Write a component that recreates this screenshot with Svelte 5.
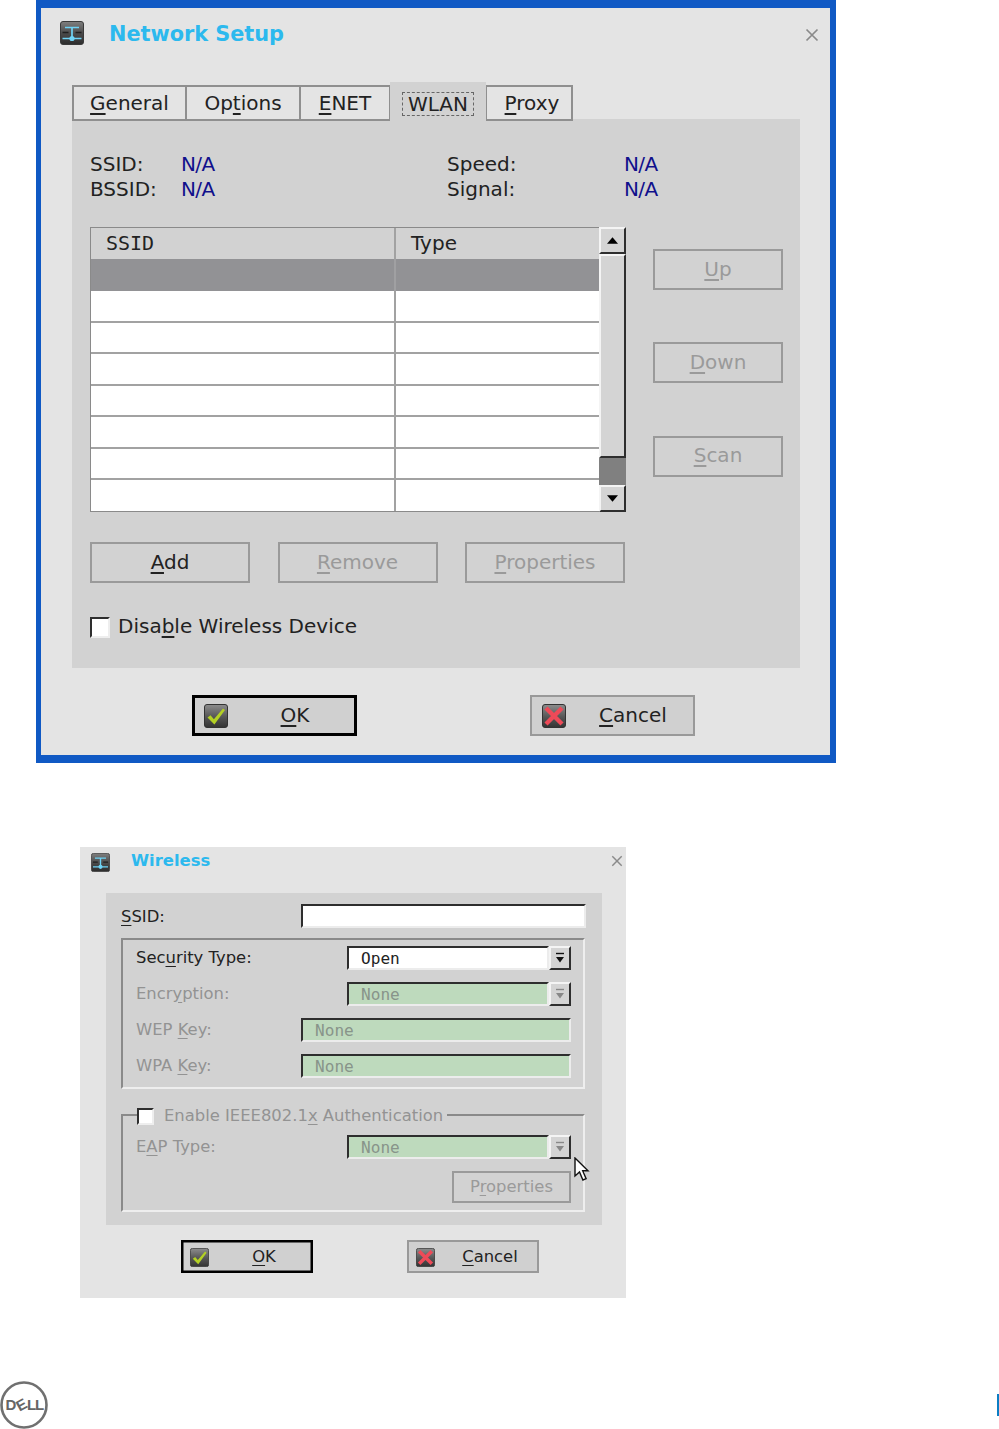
<script>
  const tabs = [
    { name: "General", key: "G", width: 114 },
    { name: "Options", key: "t", width: 114 },
    { name: "ENET", key: "E", width: 90 },
    { name: "WLAN", key: "", width: 96, active: true },
    { name: "Proxy", key: "P", width: 87 }
  ];
  const rows = [0, 1, 2, 3, 4, 5, 6, 7];

  // split a label round its mnemonic letter
  function parts(text, key) {
    const i = key ? text.indexOf(key) : -1;
    if (i < 0) return [text, "", ""];
    return [text.slice(0, i), key, text.slice(i + 1)];
  }
</script>

{#snippet label(text, key)}
  {@const p = parts(text, key)}
  {p[0]}<u>{p[1]}</u>{p[2]}
{/snippet}

{#snippet appIcon()}
  <svg class="tile" viewBox="0 0 24 24">
    <rect x="0.5" y="0.5" width="23" height="23" rx="2.5" fill="url(#tileFill)" stroke="#3a3a3a" />
    <defs>
      <linearGradient id="tileFill" x1="0" y1="0" x2="0" y2="1">
        <stop offset="0" stop-color="#808080" />
        <stop offset="0.5" stop-color="#4c4c4c" />
        <stop offset="1" stop-color="#2c2c2c" />
      </linearGradient>
    </defs>
    <path d="M5 6.5h14M12 6.5v11M2.5 17.5h19" stroke="#6fd3f5" stroke-width="1.7" fill="none" />
    <path d="M2.5 11.5h6M15.5 11.5h6" stroke="#1f1f1f" stroke-width="1.4" fill="none" />
    <circle cx="12" cy="17.5" r="2.6" fill="#6fd3f5" />
  </svg>
{/snippet}

{#snippet okIcon()}
  <svg class="tile" viewBox="0 0 24 24">
    <rect x="0.5" y="0.5" width="23" height="23" rx="2.5" fill="url(#okFill)" stroke="#333" />
    <defs>
      <linearGradient id="okFill" x1="0" y1="0" x2="0" y2="1">
        <stop offset="0" stop-color="#8d8d8d" />
        <stop offset="0.55" stop-color="#555" />
        <stop offset="1" stop-color="#333" />
      </linearGradient>
    </defs>
    <path d="M3.5 13.5l3-2.2 3.4 4L19 4.5l2 1.6-10.6 14.4z" fill="#b3d024" />
  </svg>
{/snippet}

{#snippet cancelIcon()}
  <svg class="tile" viewBox="0 0 24 24">
    <rect x="0.5" y="0.5" width="23" height="23" rx="2.5" fill="url(#noFill)" stroke="#333" />
    <defs>
      <linearGradient id="noFill" x1="0" y1="0" x2="0" y2="1">
        <stop offset="0" stop-color="#8d8d8d" />
        <stop offset="0.55" stop-color="#555" />
        <stop offset="1" stop-color="#333" />
      </linearGradient>
    </defs>
    <path d="M4 4l16 16M20 4L4 20" stroke="#ee4a58" stroke-width="4.4" fill="none" />
  </svg>
{/snippet}

{#snippet closeIcon()}
  <svg class="close" viewBox="0 0 14 14">
    <path d="M1.5 1.5l11 11M12.5 1.5l-11 11" stroke="#8a8a8a" stroke-width="1.7" fill="none" />
  </svg>
{/snippet}

{#snippet comboArrow()}
  <svg class="combo-arrow" viewBox="0 0 10 12">
    <path d="M1 1.5h8" stroke="currentColor" stroke-width="1.4" fill="none" />
    <path d="M1 5h8L5 10.5z" fill="currentColor" />
  </svg>
{/snippet}

{#snippet combo(value, disabled)}
  <div class="combo" class:off={disabled}>
    <div class="field">{value}</div>
    <div class="combo-btn">{@render comboArrow()}</div>
  </div>
{/snippet}

<div class="page">
  <section class="setup">
    <header class="titlebar">
      {@render appIcon()}
      <h1>Network Setup</h1>
      {@render closeIcon()}
    </header>

    <nav class="tabs">
      {#each tabs as tab}
        <div class="tab" class:active={tab.active} class:last={tab.name === "Proxy"} style="width: {tab.width}px">
          {#if tab.active}
            <span class="focus">{tab.name}</span>
          {:else}
            <span>{@render label(tab.name, tab.key)}</span>
          {/if}
        </div>
      {/each}
    </nav>

    <div class="panel">
      <div class="info">
        <span>SSID:</span><span class="na">N/A</span><span>Speed:</span><span class="na">N/A</span>
        <span>BSSID:</span><span class="na">N/A</span><span>Signal:</span><span class="na">N/A</span>
      </div>

      <div class="list-area">
        <div class="list">
          <div class="grid">
            <div class="row head"><div class="cell">SSID</div><div class="cell">Type</div></div>
            {#each rows as r}
              <div class="row" class:selected={r === 0}><div class="cell"></div><div class="cell"></div></div>
            {/each}
          </div>
          <div class="scroll">
            <div class="sb-btn up"><svg viewBox="0 0 12 7"><path d="M6 0l6 7H0z" /></svg></div>
            <div class="thumb"></div>
            <div class="trough"></div>
            <div class="sb-btn down"><svg viewBox="0 0 12 7"><path d="M0 0h12L6 7z" /></svg></div>
          </div>
        </div>
        <div class="side">
          <button class="btn off">{@render label("Up", "U")}</button>
          <button class="btn off">{@render label("Down", "D")}</button>
          <button class="btn off">{@render label("Scan", "S")}</button>
        </div>
      </div>

      <div class="actions">
        <button class="btn">{@render label("Add", "A")}</button>
        <button class="btn off">{@render label("Remove", "R")}</button>
        <button class="btn off">{@render label("Properties", "P")}</button>
      </div>

      <div class="disable">
        <span class="check"></span>
        <span class="disable-text">{@render label("Disable Wireless Device", "b")}</span>
      </div>
    </div>

    <div class="footer">
      <button class="dlg default">{@render okIcon()}<span>{@render label("OK", "O")}</span></button>
      <button class="dlg">{@render cancelIcon()}<span>{@render label("Cancel", "C")}</span></button>
    </div>
  </section>

  <section class="wireless">
    <header class="titlebar">
      {@render appIcon()}
      <h2>Wireless</h2>
      {@render closeIcon()}
    </header>

    <div class="panel">
      <div class="line ssid">
        <span>{@render label("SSID:", "S")}</span>
        <div class="field blank"></div>
      </div>

      <div class="group">
        <div class="line wide">
          <span class="cap">{@render label("Security Type:", "u")}</span>
          {@render combo("Open", false)}
        </div>
        <div class="line wide muted">
          <span class="cap">{@render label("Encryption:", "y")}</span>
          {@render combo("None", true)}
        </div>
        <div class="line muted">
          <span class="cap">WEP {@render label("Key:", "K")}</span>
          <div class="field off key">None</div>
        </div>
        <div class="line muted">
          <span class="cap">WPA {@render label("Key:", "K")}</span>
          <div class="field off key">None</div>
        </div>
      </div>

      <div class="group auth">
        <div class="legend">
          <span class="check small"></span>
          <span class="cap">{@render label("Enable IEEE802.1x Authentication", "x")}</span>
        </div>
        <div class="line wide muted">
          <span class="cap">{@render label("EAP Type:", "A")}</span>
          {@render combo("None", true)}
        </div>
        <button class="btn off props">{@render label("Properties", "r")}</button>
      </div>
    </div>

    <div class="footer">
      <button class="dlg default">{@render okIcon()}<span>{@render label("OK", "O")}</span></button>
      <button class="dlg">{@render cancelIcon()}<span>{@render label("Cancel", "C")}</span></button>
    </div>

    <svg class="cursor" viewBox="0 0 16 24">
      <path d="M1 1v18l4.5-4 3.4 8 3.2-1.4-3.4-7.8H14z" fill="#fff" stroke="#111" stroke-width="1.4" />
    </svg>
  </section>

  <footer class="pagefoot">
    <svg class="dell" viewBox="0 0 48 48">
      <circle cx="24" cy="24" r="22.5" fill="none" stroke="#707070" stroke-width="2.6" />
      <g class="dell-text">
        <text x="5.5" y="29">D</text>
        <text x="21.5" y="29" text-anchor="middle" transform="rotate(-28 21.5 24)">E</text>
        <text x="27" y="29">L</text>
        <text x="35" y="29">L</text>
      </g>
    </svg>
    <div class="pagebar"></div>
  </footer>
</div>

<style>
  :global(body) {
    margin: 0;
    background: #fff;
    font-family: "DejaVu Sans", sans-serif;
    color: #222;
  }

  .page {
    width: 999px;
    height: 1429px;
    overflow: hidden;
  }

  u {
    text-underline-offset: 3px;
  }

  h1,
  h2 {
    margin: 0;
    color: #2cb9ee;
    font-weight: bold;
  }

  .tile {
    display: block;
    flex: none;
  }

  .titlebar {
    display: flex;
    align-items: center;
  }

  .close {
    flex: none;
    margin-left: auto;
  }

  /* first dialog */
  .setup {
    box-sizing: border-box;
    width: 800px;
    height: 763px;
    margin-left: 36px;
    background: #e4e4e4;
    border: solid #1059c4;
    border-width: 8px 6px 8px 5px;
    font-size: 20px;
  }

  .setup .titlebar {
    height: 50px;
    padding: 0 11px 0 19px;
  }

  .setup .tile {
    width: 24px;
    height: 24px;
  }

  .setup h1 {
    margin: 1px 0 0 25px;
    font-size: 20.8px;
    line-height: 50px;
  }

  .setup .close {
    width: 14px;
    height: 14px;
    margin-top: 3px;
  }

  .tabs {
    display: flex;
    align-items: flex-end;
    height: 39px;
    margin: 24px 0 -2px 31px;
    position: relative;
  }

  .tab {
    box-sizing: border-box;
    height: 36px;
    display: flex;
    align-items: center;
    justify-content: center;
    background: #e4e4e4;
    border: 2px solid #8f8f8f;
    border-left-width: 1px;
    border-right-width: 1px;
  }

  .tab:first-child {
    border-left-width: 2px;
  }

  .tab.last {
    padding-left: 6px;
    border-right-width: 2px;
  }

  .tab.active {
    height: 39px;
    padding-top: 4px;
    background: #d2d2d2;
    border: none;
  }

  .focus {
    padding: 0 5px;
    line-height: 22px;
    border: 1px dashed #666;
  }

  .setup .panel {
    box-sizing: border-box;
    width: 728px;
    height: 549px;
    margin-left: 31px;
    padding: 32px 0 0 18px;
    background: #d2d2d2;
  }

  .info {
    display: grid;
    grid-template-columns: 91px 266px 177px auto;
    grid-auto-rows: 25.5px;
    align-items: center;
  }

  .na {
    color: #10108c;
    letter-spacing: -0.6px;
  }

  .list-area {
    display: flex;
    margin-top: 25px;
  }

  .list {
    display: flex;
    width: 536px;
    height: 285px;
  }

  .grid {
    box-sizing: border-box;
    width: 509px;
    border: solid #8a8a8a;
    border-width: 1px 0 1px 1px;
  }

  .row {
    box-sizing: border-box;
    display: grid;
    grid-template-columns: 303px 1fr;
    height: 31.5px;
    background: #fff;
    border-bottom: 2px solid #a2a2a2;
  }

  .row:last-child {
    height: 31px;
    border-bottom: none;
  }

  .row.head {
    height: 31px;
    background: #d2d2d2;
    border-bottom: none;
  }

  .row.selected {
    height: 32px;
    background: #929295;
    border-bottom: none;
  }

  .cell {
    border-left: 2px solid #a2a2a2;
    padding-left: 15px;
    line-height: 31px;
  }

  .row .cell:first-child {
    border-left: none;
  }

  .row.head .cell:first-child {
    font-family: "DejaVu Sans Mono", monospace;
  }

  .row.selected .cell {
    border-color: #a0a0a2;
  }

  .scroll {
    flex: 1;
    display: flex;
    flex-direction: column;
  }

  .sb-btn,
  .thumb {
    box-sizing: border-box;
    background: #d4d4d4;
    border: 2px solid;
    border-color: #f4f4f4 #2e2e2e #2e2e2e #f4f4f4;
  }

  .sb-btn {
    height: 27px;
    display: flex;
    align-items: center;
    justify-content: center;
  }

  .sb-btn svg {
    width: 11px;
    height: 7px;
    display: block;
  }

  .thumb {
    height: 204px;
  }

  .trough {
    height: 27px;
    background: #808080;
  }

  .side {
    display: flex;
    flex-direction: column;
    gap: 52.3px;
    margin-left: 27px;
    padding-top: 22px;
  }

  .btn {
    box-sizing: border-box;
    width: 130px;
    height: 41px;
    padding: 0 0 2px;
    background: #d2d2d2;
    border: 2px solid #9a9a9a;
    font: inherit;
    color: #222;
  }

  .btn.off {
    color: #9a9a9a;
  }

  .actions {
    display: flex;
    gap: 27.5px;
    margin-top: 30px;
  }

  .actions .btn {
    width: 160px;
  }

  .disable {
    display: flex;
    align-items: center;
    gap: 8px;
    margin-top: 34px;
  }

  .disable-text {
    margin-top: -3px;
  }

  .check {
    box-sizing: border-box;
    width: 20px;
    height: 21px;
    background: #fff;
    border: 2px solid;
    border-color: #2e2e2e #eee #eee #2e2e2e;
  }

  .footer {
    display: flex;
  }

  .setup .footer {
    gap: 173px;
    margin: 27px 0 0 151px;
  }

  .dlg {
    box-sizing: border-box;
    display: flex;
    align-items: center;
    width: 165px;
    height: 41px;
    padding: 0 0 0 10px;
    background: #d0d0d0;
    border: 2px solid #999;
    font: inherit;
    color: #222;
  }

  .dlg.default {
    border: 3px solid #000;
    padding-left: 9px;
  }

  .dlg span {
    flex: 1;
    margin-top: -2px;
    text-align: center;
    padding-left: 7px;
  }

  .setup .dlg.default span {
    padding-left: 8px;
  }

  /* second dialog */
  .wireless {
    position: relative;
    box-sizing: border-box;
    width: 546px;
    height: 451px;
    margin: 84px 0 0 80px;
    background: #e4e4e4;
    font-size: 16.4px;
  }

  .wireless .titlebar {
    height: 28px;
    padding: 0 3px 0 11px;
  }

  .wireless .tile {
    width: 19px;
    height: 19px;
    margin-top: 2px;
  }

  .wireless h2 {
    margin-left: 21px;
    font-size: 16.4px;
    line-height: 26px;
  }

  .wireless .close {
    width: 12px;
    height: 12px;
  }

  .wireless .panel {
    box-sizing: border-box;
    width: 496px;
    height: 332px;
    margin: 18px 0 0 26px;
    padding: 11px 0 0 15px;
    background: #d2d2d2;
  }

  .line {
    display: flex;
    align-items: center;
    justify-content: space-between;
  }

  .ssid {
    width: 465px;
  }

  .ssid .field {
    width: 285px;
  }

  .cap {
    margin-top: -2px;
  }

  .field {
    box-sizing: border-box;
    height: 24px;
    padding-left: 12px;
    line-height: 21px;
    font-family: "DejaVu Sans Mono", monospace;
    font-size: 16.1px;
    background: #fff;
    border: 2px solid;
    border-color: #2e2e2e #ececec #ececec #2e2e2e;
  }

  .field.off,
  .off .field {
    background: #bedabd;
    color: #88948a;
  }

  .key {
    width: 270px;
  }

  .group {
    box-sizing: border-box;
    display: flex;
    flex-direction: column;
    gap: 12px;
    width: 464px;
    height: 151px;
    margin-top: 10px;
    padding: 6px 12px 0 13px;
    border: 2px solid;
    border-color: #8a8a8a #eee #eee #8a8a8a;
  }

  .muted {
    color: #939393;
  }

  .combo {
    display: flex;
    width: 224px;
  }

  .combo .field {
    flex: 1;
  }

  .combo-btn {
    box-sizing: border-box;
    width: 22px;
    height: 24px;
    display: flex;
    align-items: center;
    justify-content: center;
    background: #d4d4d4;
    border: 2px solid;
    border-color: #f4f4f4 #2e2e2e #2e2e2e #f4f4f4;
    color: #111;
  }

  .combo.off .combo-btn {
    color: #888;
  }

  .combo-arrow {
    width: 10px;
    height: 12px;
  }

  .auth {
    height: 98px;
    margin-top: 25px;
    padding-top: 0;
    gap: 0;
  }

  .legend {
    display: flex;
    align-items: center;
    gap: 10px;
    width: fit-content;
    height: 18px;
    margin: -9px 0 0 1px;
    padding-right: 4px;
    background: #d2d2d2;
    color: #939393;
  }

  .check.small {
    width: 17px;
    height: 17px;
  }

  .auth .line {
    margin-top: 10px;
  }

  .wireless .btn.props {
    align-self: flex-end;
    width: 119px;
    height: 32px;
    margin-top: 12px;
    font-size: 16.4px;
  }

  .wireless .footer {
    gap: 94px;
    margin: 15px 0 0 101px;
  }

  .wireless .dlg {
    width: 132px;
    height: 33px;
    padding-left: 7px;
  }

  .wireless .dlg.default {
    border-width: 2px;
    border-color: #000;
    box-shadow: inset 0 0 0 0.5px #000;
  }

  .wireless .dlg span {
    padding-left: 8px;
    margin-top: -1px;
  }

  .cursor {
    position: absolute;
    left: 494px;
    top: 310px;
    width: 16px;
    height: 24px;
  }

  .pagefoot {
    display: flex;
    align-items: center;
    justify-content: space-between;
    height: 49px;
    margin-top: 82px;
  }

  .dell {
    width: 48px;
    height: 48px;
    display: block;
  }

  .dell-text text {
    font-family: "Liberation Sans", sans-serif;
    font-weight: bold;
    font-size: 15px;
    fill: #666;
  }

  .pagebar {
    width: 2px;
    height: 22px;
    background: #0b7ec4;
  }
</style>
